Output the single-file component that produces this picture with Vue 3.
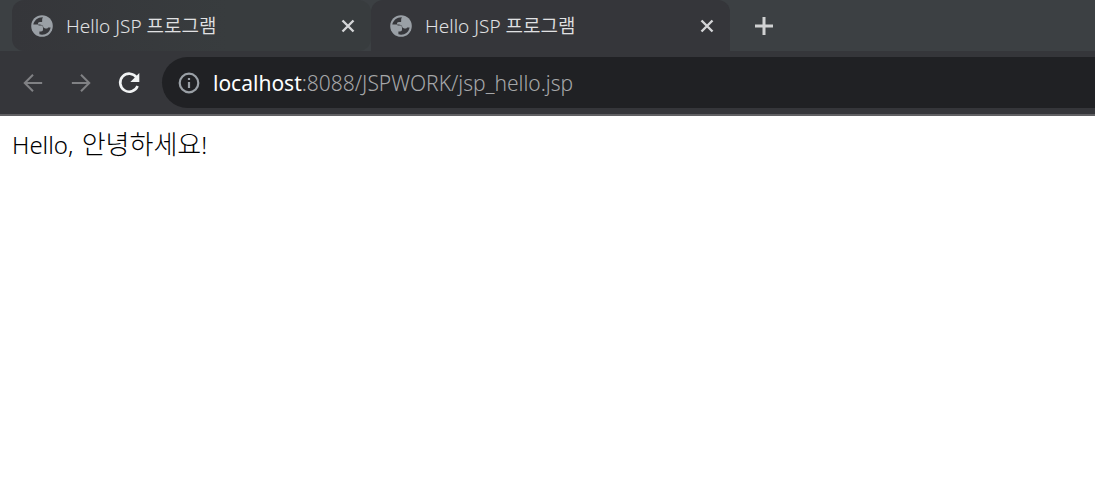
<script setup>
const tabs = [
  { id: 1, title: 'Hello JSP 프로그램', active: false },
  { id: 2, title: 'Hello JSP 프로그램', active: true },
]
</script>

<template>
  <div class="browser">
    <header>
      <div class="strip">
        <div v-for="tab in tabs" :key="tab.id" class="tab" :class="{ active: tab.active }">
          <svg class="globe" viewBox="0 0 22 22" aria-hidden="true">
            <circle cx="11" cy="11" r="10.8" fill="#9aa0a6" />
            <path fill="#36373b" d="M12 2.200C7 2 3.200 5.200 2.300 9.600h6.200c2.300 0 3.500 1.200 3.500 3.300v1.600c0 1.300-.7 2-2 2H8.400v2.800c5.600 1.500 10.300-1.900 11.200-6.900h-2.400c-.7 1-1.700 1.300-2.900 1.100-1.700-.2-2.300-1.200-2.300-2.900H8.700c-1.200 0-1.700-.6-1.700-1.700s.6-1.800 1.800-1.800h1.400c.9 0 1.100-.5 1-1.400-.1-1.300 0-2.400.8-3.500z" />
          </svg>
          <a class="title" href="#">{{ tab.title }}</a>
          <button class="close" type="button" aria-label="Close tab">
            <svg viewBox="0 0 14 14"><path d="M1.500 1.500l11 11m0-11l-11 11" /></svg>
          </button>
        </div>
        <button class="add" type="button" aria-label="New tab">
          <svg viewBox="0 0 20 20"><path d="M10 1v18M1 10h18" /></svg>
        </button>
      </div>
      <nav class="toolbar">
        <button class="nav" type="button" aria-label="Back">
          <svg viewBox="0 0 24 24"><path d="M22 12H3m9-9l-9 9 9 9" /></svg>
        </button>
        <button class="nav" type="button" aria-label="Forward">
          <svg viewBox="0 0 24 24"><path d="M2 12h19m-9-9l9 9-9 9" /></svg>
        </button>
        <button class="nav reload" type="button" aria-label="Reload">
          <svg viewBox="0 0 24 24">
            <path d="M19.600 6.500A9 9 0 1 0 20.600 15" />
            <path class="head" d="M22.300 2v9h-9z" />
          </svg>
        </button>
        <div class="omnibox">
          <button class="info" type="button" aria-label="View site information">
            <svg viewBox="0 0 22 22">
              <circle cx="11" cy="11" r="9.300" />
              <path d="M11 10v6M11 6v2" />
            </svg>
          </button>
          <a class="url" href="#"><span class="host">localhost</span>:8088/JSPWORK/jsp_hello.jsp</a>
        </div>
      </nav>
    </header>
    <main>Hello, <span class="korean" lang="ko">안녕하세요</span>!</main>
  </div>
</template>

<style>
body {
  background: #fff;
}
</style>

<style scoped>
.browser {
  font-family: "Noto Sans", "Noto Sans CJK KR", sans-serif;
}
header {
  background: #35363a;
  border-bottom: 2px solid #606063;
}
button {
  display: flex;
  align-items: center;
  justify-content: center;
  flex: none;
  padding: 0;
  border: 0;
  background: none;
}
a {
  color: inherit;
  text-decoration: none;
}
svg {
  display: block;
  flex: none;
  fill: none;
}
.strip {
  display: flex;
  height: 51px;
  padding-left: 12px;
  background: #3c4043;
}
.tab {
  display: flex;
  align-items: center;
  flex: 0 1 359px;
  min-width: 0;
  box-sizing: border-box;
  padding: 0 15px 0 19px;
  border-radius: 12px;
  background: linear-gradient(90deg, #35363a, #383c3e 60%);
  color: #e0e1e3;
}
.tab.active {
  border-radius: 12px 12px 0 0;
  background: #35363a;
}
.globe {
  width: 22px;
  height: 22px;
}
.title {
  flex: 1;
  min-width: 0;
  margin-left: 13px;
  overflow: hidden;
  font-size: 19px;
  font-weight: 350;
  line-height: 26px;
  white-space: nowrap;
}
.close svg {
  width: 14px;
  height: 14px;
  stroke: #d4d5d7;
  stroke-width: 2.400;
}
.tab .close {
  width: 16px;
  height: 24px;
}
.add {
  width: 32px;
  margin-left: 18px;
}
.add svg {
  width: 20px;
  height: 20px;
  stroke: #d0d1d2;
  stroke-width: 3;
}
.toolbar {
  display: flex;
  align-items: center;
  padding: 6px 0 6px 9px;
}
.nav {
  width: 48px;
  height: 48px;
}
.nav svg {
  width: 22px;
  height: 22px;
  stroke: #808184;
  stroke-width: 2.200;
}
.nav.reload svg {
  width: 24px;
  height: 24px;
  stroke: #f1f3f4;
  stroke-width: 2.600;
}
.nav.reload .head {
  fill: #f1f3f4;
  stroke: none;
}
.omnibox {
  display: flex;
  align-items: center;
  flex: 1;
  min-width: 0;
  height: 51px;
  margin-left: 9px;
  padding-left: 16px;
  border-radius: 26px 0 0 26px;
  background: #202124;
}
.info svg {
  width: 22px;
  height: 22px;
  stroke: #9aa0a6;
  stroke-width: 2.200;
}
.url {
  margin-left: 13px;
  overflow: hidden;
  color: #a6a7a9;
  font-size: 21px;
  font-weight: 350;
  line-height: 32px;
  white-space: nowrap;
}
.host {
  color: #fff;
  font-weight: 370;
}
main {
  padding: 11px 12px;
  color: #000;
  font-size: 24px;
  font-weight: 320;
  line-height: 34px;
}
.korean {
  margin-left: 2px;
  font-size: 26px;
}
</style>
